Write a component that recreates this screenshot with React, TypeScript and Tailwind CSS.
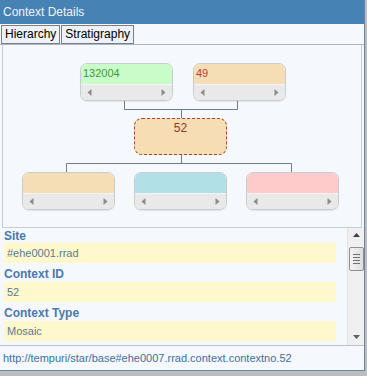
import React from "react";

const font = { fontFamily: '"Liberation Sans", Arial, sans-serif' };

type NodeProps = { left: number; top: number; color: string; label?: string; textColor?: string };

const TreeNode = ({ left, top, color, label, textColor }: NodeProps) => (
  <div
    className="absolute w-[93px] h-[38px] rounded-[7px] border border-[#c9cdd2] overflow-hidden flex flex-col shadow-[0_1px_1px_rgba(0,0,0,0.08)]"
    style={{ left, top }}
  >
    <div className={`h-[20px] ${color} px-[2px] text-[11px] leading-[18px]`} style={{ color: textColor }}>
      {label}
    </div>
    <div className="flex-1 bg-[#e9e9e9] border-t border-[#f4f4f4] flex items-center justify-between px-[6px]">
      <svg width="5" height="7" viewBox="0 0 5 7">
        <path d="M4.5 0 L0.5 3.5 L4.5 7 Z" fill="#8c8c8c" />
      </svg>
      <svg width="5" height="7" viewBox="0 0 5 7">
        <path d="M0.5 0 L4.5 3.5 L0.5 7 Z" fill="#8c8c8c" />
      </svg>
    </div>
  </div>
);

const props = [
  { label: "Site", value: "#ehe0001.rrad" },
  { label: "Context ID", value: "52" },
  { label: "Context Type", value: "Mosaic" },
];

export default function App() {
  return (
    <div className="w-[367px] h-[376px] bg-[#b9bcc0] overflow-hidden" style={font}>
      <div className="w-[365px] h-[371px] bg-[#f5f8fc] border-r border-b border-[#6d84a0] flex flex-col">
        {/* header */}
        <div className="h-[24px] bg-[#4682b4] text-[#eef4fa] text-[12px] flex items-center pl-[3px]">Context Details</div>

        {/* tabs */}
        <div className="h-[21px] border-b border-[#aab6c6] flex items-start pt-[1px] pl-[1px]">
          <div className="h-[19px] border border-[#7b7f85] bg-[#eef1f5] text-[12px] text-black px-[3px] leading-[17px]">Hierarchy</div>
          <div className="h-[19px] border border-[#7b7f85] bg-[#eef1f5] text-[12px] text-black px-[3px] leading-[17px] ml-[1px]">Stratigraphy</div>
        </div>

        {/* hierarchy diagram */}
        <div className="relative mx-[2px] h-[183px] border-x border-b border-[#c3cedb]">
          <svg className="absolute inset-0" width="356" height="182">
            <g stroke="#6f7c8a" strokeWidth="1" fill="none">
              <path d="M121.5 55 V64.5 H234.5 V55" />
              <path d="M178.5 64.5 V73" />
              <path d="M178.5 110 V118.5" />
              <path d="M63.5 127 V118.5 H288.5 V127" />
            </g>
          </svg>
          <TreeNode left={77} top={18} color="bg-[#c9fcc9]" label="132004" textColor="#3e993e" />
          <TreeNode left={190} top={18} color="bg-[#f5ddb5]" label="49" textColor="#b8432b" />
          <div className="absolute left-[131px] top-[73px] w-[93px] h-[37px] rounded-[8px] border border-dashed border-[#9b4a2e] bg-[#f6ddb3] text-center text-[12px] leading-[18px] text-[#8e3b26]">
            52
          </div>
          <TreeNode left={19} top={127} color="bg-[#f5ddb5]" />
          <TreeNode left={131} top={127} color="bg-[#b1e0e7]" />
          <TreeNode left={243} top={127} color="bg-[#ffcaca]" />
        </div>

        {/* properties */}
        <div className="h-[117px] flex">
          <div className="flex-1 overflow-hidden">
            {props.map((p, i) => (
              <div key={p.label} className={i === 0 ? "" : "mt-[3px]"}>
                <div className={`${i === 0 ? "h-[15px]" : "h-[16px]"} pl-[4px] flex items-center text-[12px] font-bold text-[#4b79ad]`}>
                  {p.label}
                </div>
                <div className="ml-[4px] w-[332px] h-[20px] bg-[#fff8cc] pl-[3px] flex items-center text-[11px] text-[#587b93]">
                  {p.value}
                </div>
              </div>
            ))}
          </div>
          <div className="w-[17px] bg-[#f0f0f0] border-l border-[#e2e2e2] flex flex-col items-center relative">
            <svg className="mt-[5px]" width="7" height="4" viewBox="0 0 7 4">
              <path d="M0 4 L3.5 0 L7 4 Z" fill="#404040" />
            </svg>
            <div className="mt-[10px] w-[15px] h-[24px] rounded-[2px] border border-[#8e8f8f] bg-gradient-to-r from-[#f3f3f3] to-[#dedede] flex flex-col items-center justify-center gap-[2px]">
              <div className="w-[7px] h-[1px] bg-[#707070]" />
              <div className="w-[7px] h-[1px] bg-[#707070]" />
              <div className="w-[7px] h-[1px] bg-[#707070]" />
              <div className="w-[7px] h-[1px] bg-[#707070]" />
            </div>
            <svg className="absolute bottom-[6px]" width="7" height="4" viewBox="0 0 7 4">
              <path d="M0 0 L7 0 L3.5 4 Z" fill="#606060" />
            </svg>
          </div>
        </div>

        {/* footer */}
        <div className="flex-1 border-t border-[#b7c3d3] pl-[3px] pt-[1px] flex items-center text-[11px] text-[#3f6fa2]">
          http://tempuri/star/base#ehe0007.rrad.context.contextno.52
        </div>
      </div>
    </div>
  );
}
